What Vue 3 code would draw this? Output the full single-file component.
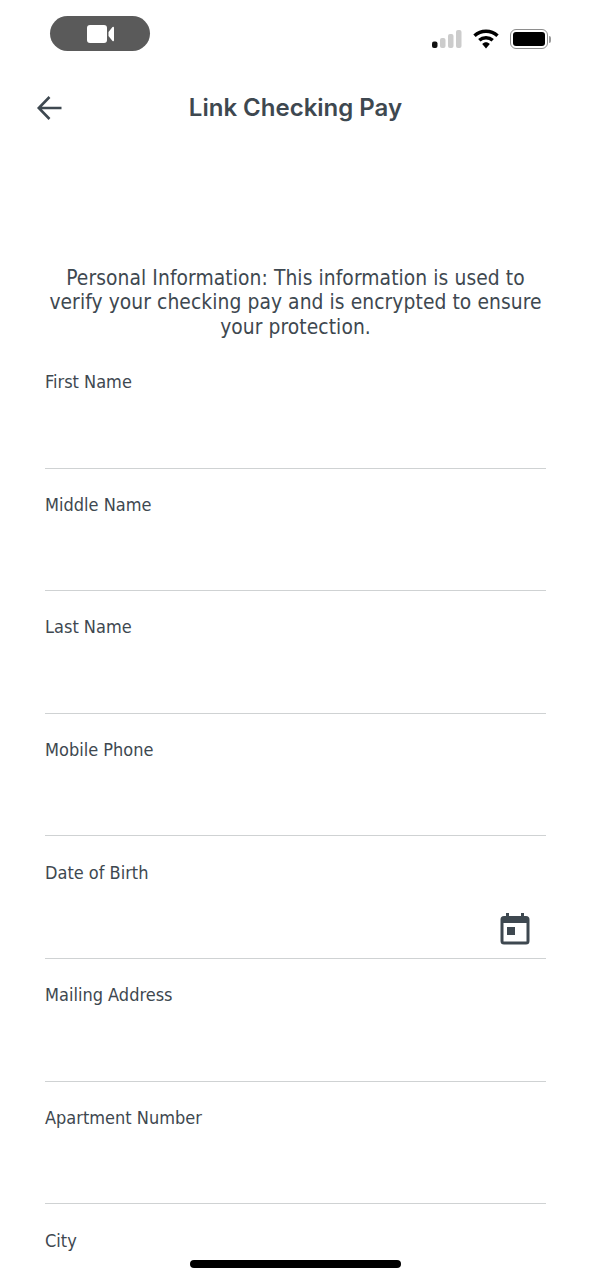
<script setup>
const fields = [
  { label: 'First Name' },
  { label: 'Middle Name' },
  { label: 'Last Name' },
  { label: 'Mobile Phone' },
  { label: 'Date of Birth', calendar: true },
  { label: 'Mailing Address' },
  { label: 'Apartment Number' },
  { label: 'City' },
]
</script>

<template>
  <div class="screen">
    <div class="status">
      <div class="pill">
        <svg width="30" height="18" viewBox="0 0 30 18">
          <rect x="2" y="0" width="20" height="18" rx="3" fill="#fff" />
          <path d="M23.500 7 L27.500 2 Q29 1 29 3 V15 Q29 17 27.500 16 L23.500 11 Z" fill="#fff" />
        </svg>
      </div>
      <div class="indicators">
        <svg width="31" height="20" viewBox="0 0 31 20">
          <rect x="1" y="12.500" width="5.500" height="6.500" rx="2" fill="#111" />
          <rect x="9" y="9" width="5.500" height="10" rx="2" fill="#ccc" />
          <rect x="17" y="5" width="5.500" height="14" rx="2" fill="#ccc" />
          <rect x="25" y="1" width="5.500" height="18" rx="2" fill="#ccc" />
        </svg>
        <svg class="wifi" width="26" height="20" viewBox="0 0 26 20">
          <path d="M1.500 6.800 C8 0.800 18 0.800 24.500 6.800" fill="none" stroke="#000" stroke-width="3.500" />
          <path d="M6.300 11.300 C10 8 16 8 19.700 11.300" fill="none" stroke="#000" stroke-width="3.500" />
          <path d="M9.200 15 C11.500 12.800 14.500 12.800 16.800 15 L13 19.500 Z" fill="#000" />
        </svg>
        <div class="battery">
          <div class="battery-level"></div>
        </div>
        <div class="battery-cap"></div>
      </div>
    </div>

    <header class="nav">
      <svg class="back" width="28" height="28" viewBox="0 0 28 28">
        <path d="M25.500 14 H3 M13.500 3 L2.800 14 L13.500 25" fill="none" stroke="#3e4850" stroke-width="2.600" />
      </svg>
      <h1 class="title">Link Checking Pay</h1>
    </header>

    <p class="intro">
      Personal Information: This information is used to verify your checking pay and is encrypted to ensure your protection.
    </p>

    <div class="form">
      <div v-for="field in fields" :key="field.label" class="field">
        <div class="label">{{ field.label }}</div>
        <div class="input">
          <svg v-if="field.calendar" class="calendar" width="30" height="32" viewBox="0 0 30 32">
            <path
              fill-rule="evenodd"
              d="M6 0 H9 V3 H21 V0 H24 V3 H26 Q29.500 3 29.500 6.500 V28 Q29.500 31.500 26 31.500 H4 Q0.500 31.500 0.500 28 V6.500 Q0.500 3 4 3 H6 Z M3.500 10 V28.500 H26.500 V10 Z"
              fill="#3e4850"
            />
            <rect x="7" y="14" width="8" height="8" fill="#3e4850" />
          </svg>
        </div>
      </div>
    </div>

    <div class="home-indicator"></div>
  </div>
</template>

<style scoped>
.screen {
  position: relative;
  width: 591px;
  height: 1280px;
  overflow: hidden;
  background: #fff;
  color: #3e4850;
  font-family: "DejaVu Sans", sans-serif;
  font-stretch: condensed;
}
.status {
  display: flex;
  justify-content: space-between;
  align-items: flex-start;
  height: 72px;
  padding: 16px 40px 0 50px;
  box-sizing: border-box;
}
.pill {
  display: flex;
  align-items: center;
  justify-content: center;
  width: 100px;
  height: 35px;
  border-radius: 18px;
  background: #5a5a5a;
}
.indicators {
  display: flex;
  align-items: center;
  margin-top: 13px;
}
.wifi {
  margin-left: 11px;
}
.battery {
  box-sizing: border-box;
  width: 38px;
  height: 20px;
  margin-left: 11px;
  padding: 2px;
  border: 1.500px solid #8e8e8e;
  border-radius: 6px;
}
.battery-level {
  height: 100%;
  border-radius: 3px;
  background: #000;
}
.battery-cap {
  width: 2px;
  height: 7px;
  margin-left: 1px;
  border-radius: 0 2px 2px 0;
  background: #999;
}
.nav {
  position: relative;
  display: flex;
  align-items: center;
  justify-content: center;
  height: 72px;
}
.back {
  position: absolute;
  left: 36px;
  top: 22px;
}
.title {
  margin: 0;
  font-family: Inter, sans-serif;
  font-size: 24px;
  font-weight: 600;
  line-height: 72px;
}
.intro {
  width: 500px;
  margin: 121.500px auto 0;
  font-size: 20.800px;
  letter-spacing: 0.080px;
  line-height: 24.500px;
  text-align: center;
}
.form {
  margin: 31px 45px 0;
}
.field {
  box-sizing: border-box;
  height: 122.670px;
}
.label {
  font-size: 18px;
  line-height: 24px;
}
.input {
  display: flex;
  align-items: flex-end;
  justify-content: flex-end;
  box-sizing: border-box;
  height: 74.500px;
  padding-right: 16px;
  padding-bottom: 13.500px;
  border-bottom: 1.500px solid #cfd2d3;
}
.home-indicator {
  position: absolute;
  left: 190px;
  bottom: 12px;
  width: 211px;
  height: 8px;
  border-radius: 4px;
  background: #000;
}
</style>
